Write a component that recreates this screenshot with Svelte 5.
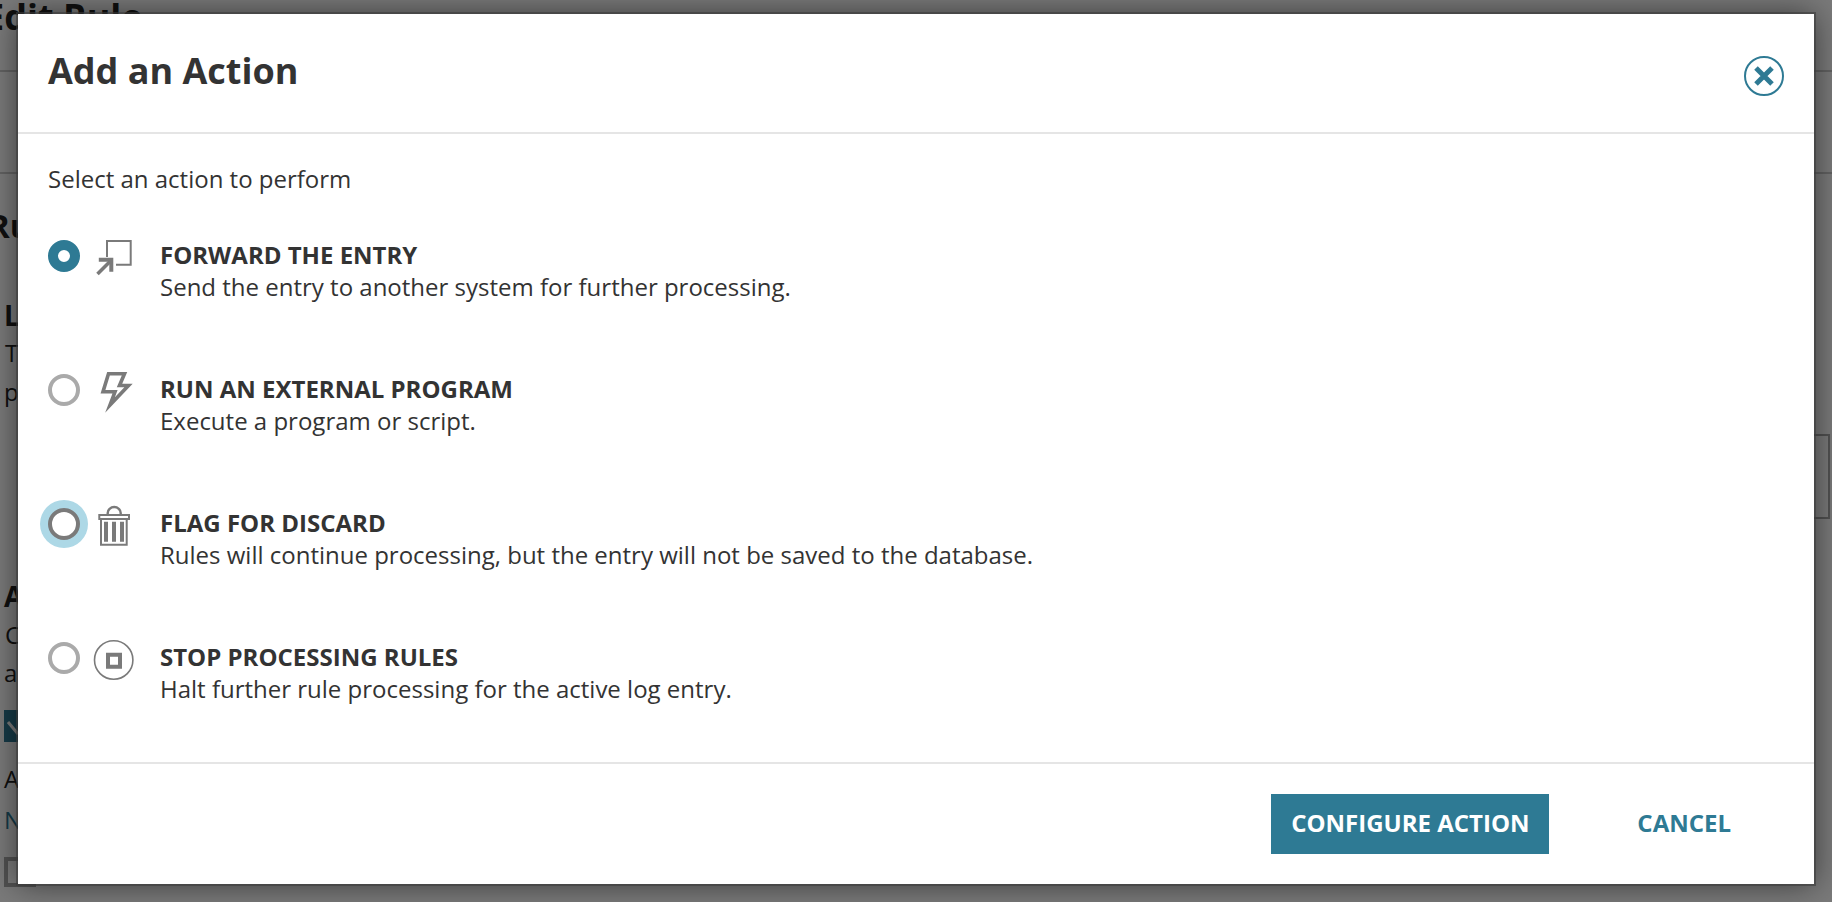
<script>
  const actions = [
    { id: "forward", title: "FORWARD THE ENTRY", desc: "Send the entry to another system for further processing." },
    { id: "run", title: "RUN AN EXTERNAL PROGRAM", desc: "Execute a program or script." },
    { id: "discard", title: "FLAG FOR DISCARD", desc: "Rules will continue processing, but the entry will not be saved to the database." },
    { id: "stop", title: "STOP PROCESSING RULES", desc: "Halt further rule processing for the active log entry." }
  ];
</script>

<div class="page">
  <!-- page behind the overlay -->
  <div class="behind" aria-hidden="true">
    <div class="b-title">Edit Rule</div>
    <div class="b-rule b-rule-1"></div>
    <div class="b-rule b-rule-2"></div>
    <div class="b-ru">Rule</div>
    <div class="b-h b-l">L</div>
    <div class="b-t b-t1">T</div>
    <div class="b-t b-p">p</div>
    <div class="b-h b-a">A</div>
    <div class="b-t b-c">C</div>
    <div class="b-t b-a2">a</div>
    <div class="b-check">
      <svg viewBox="0 0 30 32" width="30" height="32">
        <path d="M4 12 L14 24" stroke="#fff" stroke-width="3" fill="none" />
      </svg>
    </div>
    <div class="b-t b-a3">A</div>
    <div class="b-t b-n">N</div>
    <div class="b-box"></div>
    <div class="b-side"></div>
  </div>
  <div class="overlay"></div>

  <div class="modal">
    <header class="head">
      <h1>Add an Action</h1>
      <button class="close" aria-label="Close">
        <svg viewBox="0 0 40 40" width="40" height="40">
          <circle cx="20" cy="20" r="19" fill="none" stroke="#2e7a94" stroke-width="2" />
          <path d="M12 12 L28 28 M28 12 L12 28" stroke="#2e7a94" stroke-width="5" fill="none" />
        </svg>
      </button>
    </header>

    <section class="body">
      <p class="lead">Select an action to perform</p>
      <div class="list">
        {#each actions as a}
          <div class="row">
            <span class="radio {a.id}"></span>
            <span class="icon">
              {#if a.id === "forward"}
                <svg viewBox="0 0 40 40" width="40" height="40">
                  <path d="M11 19 V3 H34.7 V26.7 H20" fill="none" stroke="#7a7a7a" stroke-width="2" />
                  <path d="M1.5 36 L14 23.5" stroke="#7a7a7a" stroke-width="3.5" fill="none" />
                  <path d="M2.8 19.7 H17.3 V33.7 H13.3 V23.7 H2.8 Z" fill="#7a7a7a" />
                </svg>
              {:else if a.id === "run"}
                <svg viewBox="0 0 40 40" width="40" height="40">
                  <path
                    d="M12.5 1.8 H28.5 L23.5 13.5 H32.5 L14 33 L19 19.8 H7 Z"
                    fill="none"
                    stroke="#7a7a7a"
                    stroke-width="3.6"
                    stroke-miterlimit="10"
                  />
                </svg>
              {:else if a.id === "discard"}
                <svg viewBox="0 0 40 40" width="40" height="40">
                  <path d="M11.7 8 V7 A6.5 6 0 0 1 24.7 7 V8" fill="none" stroke="#7a7a7a" stroke-width="2.4" />
                  <path d="M3.3 9 H33 V13 H3.3 Z M5 13 V38.7 H30.7 V13" fill="none" stroke="#7a7a7a" stroke-width="2" />
                  <path d="M8 15.7 H12 V35.7 H8 Z M16 15.7 H20 V35.7 H16 Z M24 15.7 H28 V35.7 H24 Z" fill="#7a7a7a" />
                </svg>
              {:else}
                <svg viewBox="0 0 40 40" width="40" height="40">
                  <circle cx="17.7" cy="20" r="19.2" fill="none" stroke="#7a7a7a" stroke-width="1.6" />
                  <path d="M10 12.7 H26 V28.7 H10 Z M14 16.7 V24.7 H22 V16.7 Z" fill="#7a7a7a" fill-rule="evenodd" />
                </svg>
              {/if}
            </span>
            <div class="text">
              <div class="title">{a.title}</div>
              <div class="desc">{a.desc}</div>
            </div>
          </div>
        {/each}
      </div>
    </section>

    <footer class="foot">
      <button class="primary">CONFIGURE ACTION</button>
      <button class="cancel">CANCEL</button>
    </footer>
  </div>
</div>

<style>
  :global(body) {
    margin: 0;
    background: #7b7b7b;
  }

  .page {
    position: relative;
    width: 1832px;
    height: 902px;
    overflow: hidden;
    font-family: "Open Sans", "Noto Sans", sans-serif;
    background: #fff;
  }

  .behind {
    position: absolute;
    inset: 0;
    color: #222;
  }
  .behind > div {
    position: absolute;
  }
  .b-title {
    left: -16px;
    top: -6px;
    font-size: 36px;
    font-weight: 700;
    line-height: 45px;
    white-space: nowrap;
  }
  .b-rule {
    left: 0;
    right: 0;
    height: 2px;
    background: #ccc;
  }
  .b-rule-1 { top: 70px; }
  .b-rule-2 { top: 172px; }
  .b-ru {
    left: -12px;
    top: 206px;
    font-size: 33px;
    line-height: 40px;
    font-weight: 700;
  }
  .b-h {
    font-weight: 700;
    font-size: 28px;
    line-height: 34px;
  }
  .b-t {
    font-size: 24px;
    line-height: 33px;
  }
  .b-l { left: 4px; top: 298px; }
  .b-t1 { left: 5px; top: 336px; }
  .b-p { left: 4px; top: 375px; }
  .b-a { left: 4px; top: 579px; }
  .b-c { left: 5px; top: 618px; }
  .b-a2 { left: 4px; top: 656px; }
  .b-check {
    left: 4px;
    top: 710px;
    width: 30px;
    height: 32px;
    background: #2e7a94;
  }
  .b-a3 { left: 4px; top: 762px; }
  .b-n { left: 4px; top: 803px; color: #2e7a94; }
  .b-box {
    left: 4px;
    top: 857px;
    width: 24px;
    height: 22px;
    border: 4px solid #aaa;
  }
  .b-side {
    left: 1700px;
    top: 434px;
    width: 126px;
    height: 81px;
    border: 2px solid #aaa;
  }

  .overlay {
    position: absolute;
    inset: 0;
    background: rgba(0, 0, 0, 0.52);
  }

  .modal {
    position: absolute;
    left: 18px;
    top: 14px;
    width: 1796px;
    height: 870px;
    background: #fff;
    color: #333;
    display: flex;
    flex-direction: column;
    box-shadow: 0 0 0 2px rgba(60, 60, 60, 0.6), 0 0 30px rgba(0, 0, 0, 0.55);
  }

  .head {
    height: 118px;
    flex: none;
    border-bottom: 2px solid #e5e5e5;
    display: flex;
    align-items: flex-start;
    justify-content: space-between;
    padding: 0 30px;
  }
  h1 {
    margin: 34px 0 0;
    font-size: 36px;
    line-height: 45px;
    font-weight: 700;
  }
  .close {
    border: 0;
    padding: 0;
    background: none;
    margin: 42px 0 0;
    height: 40px;
  }

  .body {
    flex: 1;
    padding: 0 30px;
  }
  .lead {
    margin: 28px 0 0;
    font-size: 24px;
    line-height: 33px;
  }
  .list {
    margin-top: 43px;
  }
  .row {
    display: flex;
    align-items: flex-start;
    height: 134px;
  }
  .row:last-child {
    height: auto;
  }
  .radio {
    flex: none;
    width: 32px;
    height: 32px;
    margin-top: 2px;
    box-sizing: border-box;
    border-radius: 50%;
    border: 4px solid #aaa;
    background: #fff;
  }
  .radio.forward {
    border: 10px solid #2e7a94;
  }
  .radio.discard {
    border: 4px solid #7a7a7a;
    box-shadow: 0 0 0 8px #add8e6;
  }
  .icon {
    flex: none;
    width: 40px;
    height: 40px;
    margin-left: 16px;
  }
  .icon svg {
    display: block;
    overflow: visible;
  }
  .text {
    margin-left: 24px;
  }
  .title {
    font-size: 24px;
    line-height: 33px;
    font-weight: 700;
  }
  .desc {
    margin-top: -1px;
    font-size: 24px;
    line-height: 33px;
  }

  .foot {
    height: 122px;
    flex: none;
    border-top: 2px solid #e5e5e5;
    display: flex;
    align-items: flex-start;
    justify-content: flex-end;
    box-sizing: border-box;
    padding: 30px 83px 0 0;
  }
  .foot button {
    font-family: inherit;
    font-size: 24px;
    font-weight: 700;
    border: 0;
    height: 60px;
    padding: 0 0 4px;
  }
  .primary {
    width: 278px;
    background: #2e7a94;
    color: #fff;
  }
  .cancel {
    margin-left: 88px;
    background: none;
    color: #2e7a94;
  }
</style>
